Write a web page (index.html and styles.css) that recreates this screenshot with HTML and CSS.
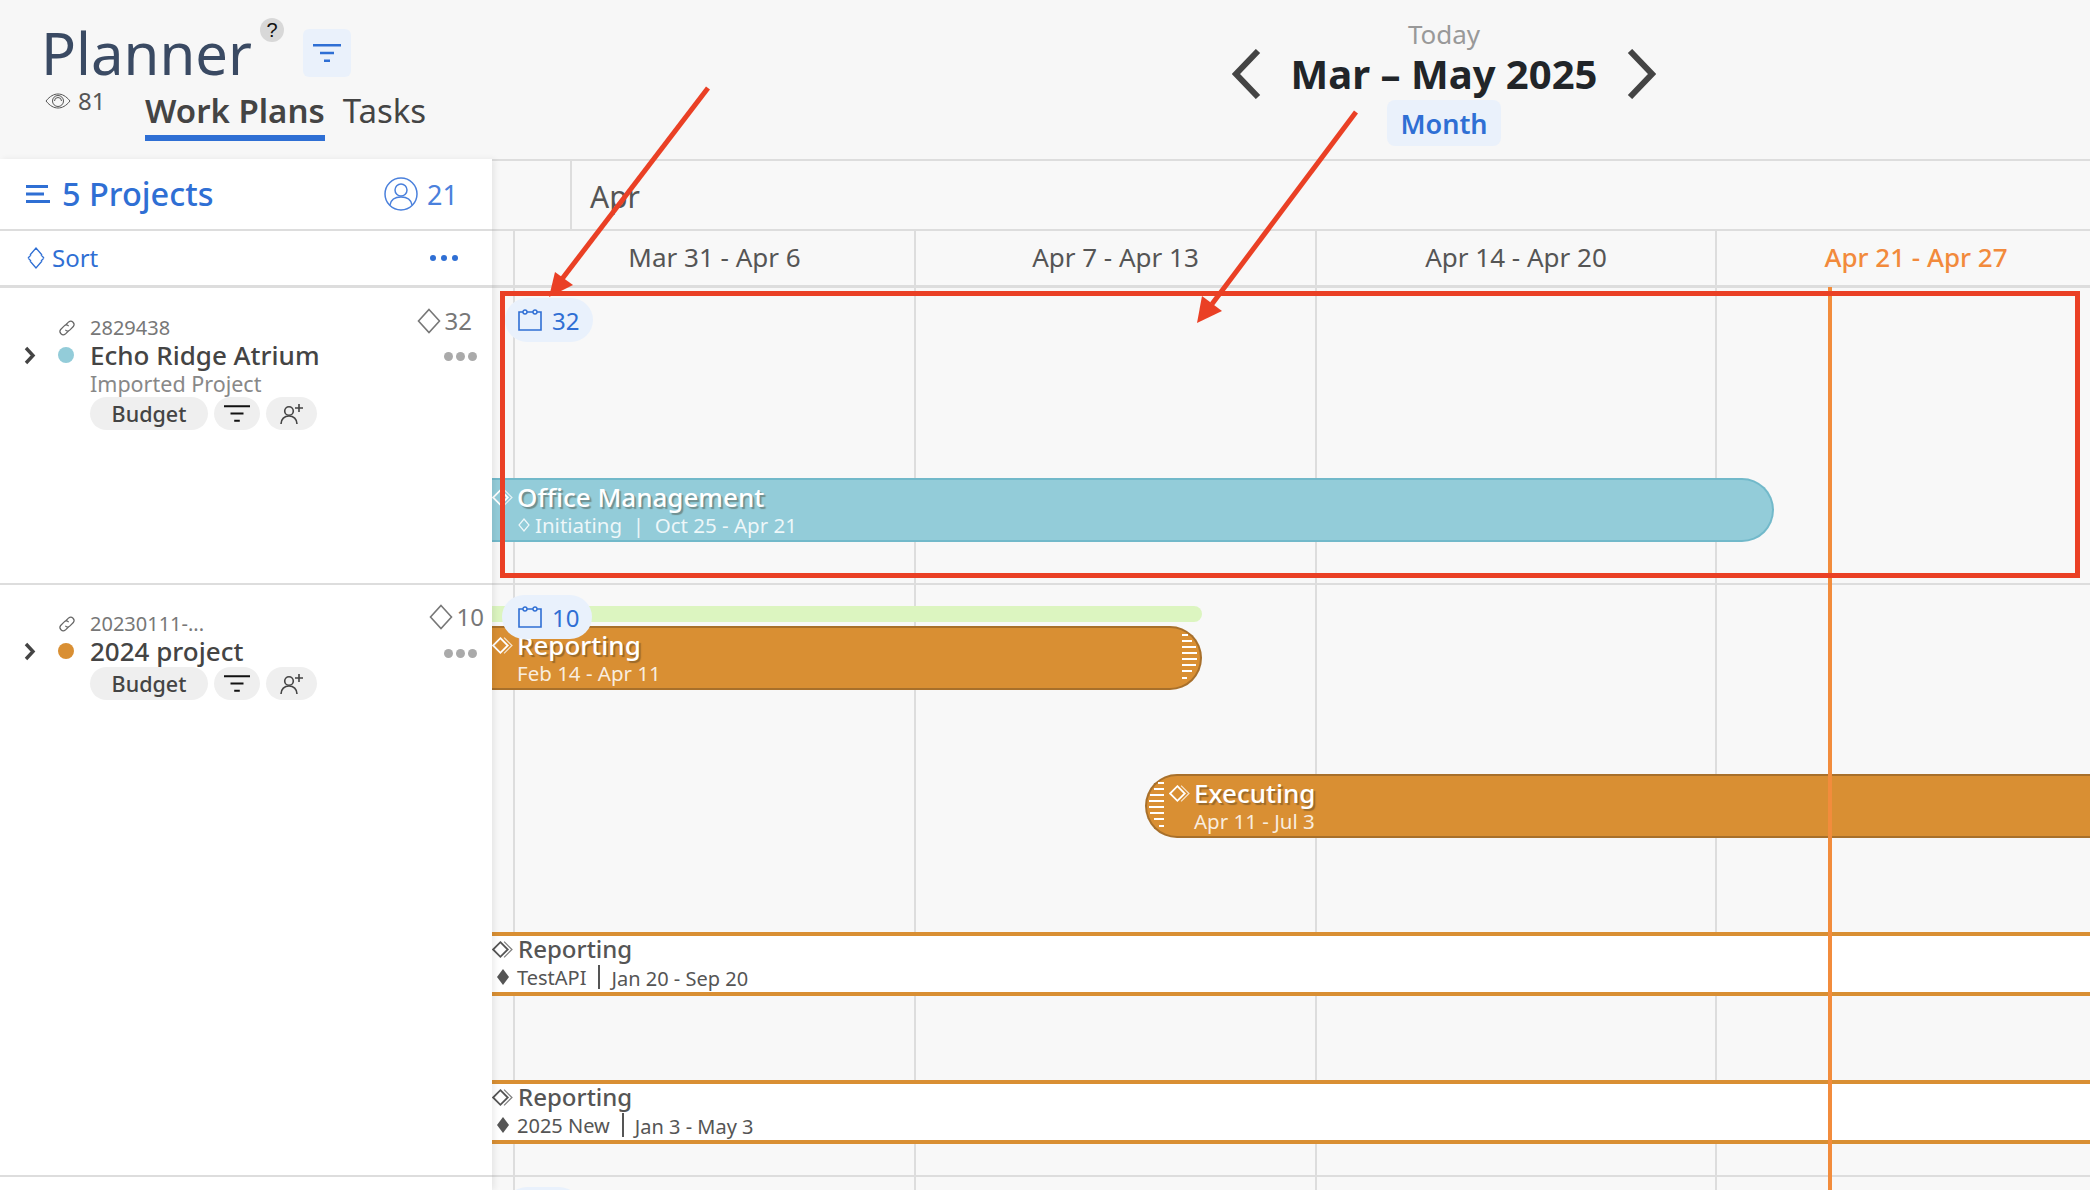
FILE: index.html
```html
<!DOCTYPE html>
<html lang="en">
<head>
<meta charset="utf-8">
<title>Planner</title>
<link rel="stylesheet" href="styles.css">
</head>
<body>
<svg class="defs" width="0" height="0" aria-hidden="true">
  <symbol id="i-cal" viewBox="0 0 24 22"><path d="M5 3H1v18h22V3h-4M9 3h6" fill="none" stroke="currentColor" stroke-width="1.6"/><circle cx="7" cy="3" r="2" fill="none" stroke="currentColor" stroke-width="1.4"/><circle cx="17" cy="3" r="2" fill="none" stroke="currentColor" stroke-width="1.4"/></symbol>
  <symbol id="i-filter" viewBox="0 0 28 18"><path d="M0 1.2h28M7 9h14M11 16.8h6" fill="none" stroke="currentColor" stroke-width="2.4"/></symbol>
  <symbol id="i-addp" viewBox="0 0 24 22"><circle cx="9" cy="8" r="4.3" fill="none" stroke="currentColor" stroke-width="1.6"/><path d="M1 21c0-5 3.500-8 8-8s8 3 8 8M19 1v8M15 5h8" fill="none" stroke="currentColor" stroke-width="1.6"/></symbol>
  <symbol id="i-link" viewBox="0 0 18 18"><path d="M7.500 6.500 10.500 3.500a3 3 0 0 1 4.200 4.200l-3 3a3 3 0 0 1-4.200 0M10.500 11.500l-3 3a3 3 0 0 1-4.200-4.200l3-3a3 3 0 0 1 4.200 0" fill="none" stroke="currentColor" stroke-width="1.1"/></symbol>
  <symbol id="i-dbl" viewBox="0 0 20 18"><path d="M8 2 15 9 8 16 1 9Z" fill="none" stroke="currentColor" stroke-width="1.7"/><path d="M11.500 1.500 19 9 11.500 16.500" fill="none" stroke="currentColor" stroke-width="1.2" opacity=".75"/></symbol>
  <symbol id="i-dia" viewBox="0 0 24 26"><path d="M12 1.500 22.500 13 12 24.500 1.500 13Z" fill="none" stroke="currentColor" stroke-width="1.6"/></symbol>
</svg>

<div class="app">
  <header class="topbar">
    <div class="brand">
      <div class="title-row">
        <h1 class="planner">Planner</h1>
        <span class="help">?</span>
        <button class="filter-btn"><svg class="filter-ico"><use href="#i-filter"/></svg></button>
      </div>
      <div class="sub-row">
        <div class="views">
          <svg class="eye" viewBox="0 0 26 16"><path d="M1 8C5 3 9 1 13 1s8 2 12 7c-4 5-8 7-12 7S5 13 1 8Z" fill="none" stroke="currentColor" stroke-width="1"/><circle cx="13" cy="8" r="5.500" fill="none" stroke="currentColor" stroke-width="1"/><path d="M9.500 8a3.500 3.500 0 0 1 7 0" fill="none" stroke="currentColor" stroke-width="1"/></svg>
          <span>81</span>
        </div>
        <nav class="tabs">
          <a class="tab tab-active">Work Plans</a>
          <a class="tab">Tasks</a>
        </nav>
      </div>
    </div>
    <div class="period">
      <div class="today">Today</div>
      <div class="period-row">
        <svg class="arrow-ico" viewBox="0 0 30 50"><path d="M26 2 4 25l22 23" fill="none" stroke="currentColor" stroke-width="6"/></svg>
        <div class="period-title">Mar – May 2025</div>
        <svg class="arrow-ico" viewBox="0 0 30 50"><path d="M4 2l22 23L4 48" fill="none" stroke="currentColor" stroke-width="6"/></svg>
      </div>
      <div class="month-chip">Month</div>
    </div>
  </header>

  <main class="main">
    <aside class="sidebar">
      <div class="side-head">
        <div class="side-head-left">
          <svg class="burger" viewBox="0 0 24 18"><path d="M0 1.500h22M0 9h18M0 16.500h24" fill="none" stroke="currentColor" stroke-width="2.800"/></svg>
          <span class="projects-label">5 Projects</span>
        </div>
        <div class="side-head-right">
          <svg class="user-ico" viewBox="0 0 34 34"><circle cx="17" cy="17" r="16" fill="none" stroke="currentColor" stroke-width="1.500"/><circle cx="17" cy="13" r="6" fill="none" stroke="currentColor" stroke-width="1.500"/><path d="M6 28c1-6 5-8 11-8s10 2 11 8" fill="none" stroke="currentColor" stroke-width="1.500"/></svg>
          <span>21</span>
        </div>
      </div>
      <div class="side-sort">
        <div class="sort-left">
          <svg class="sort-ico" viewBox="0 0 18 22"><path d="M3 8 9 1l6 7M3 14l6 7 6-7M1 11l3-3M17 11l-3-3M1 11l3 3M17 11l-3 3" fill="none" stroke="currentColor" stroke-width="1.300"/></svg>
          <span>Sort</span>
        </div>
        <div class="dots dots-blue"><i></i><i></i><i></i></div>
      </div>

      <section class="project project-first">
        <div class="project-body">
          <span></span>
          <svg class="link-ico"><use href="#i-link"/></svg>
          <div class="project-id">2829438</div>
          <svg class="chev" viewBox="0 0 12 19"><path d="M2 2l7 7.500L2 17" fill="none" stroke="currentColor" stroke-width="3.400"/></svg>
          <span class="dot dot-teal"></span>
          <div class="project-name">Echo Ridge Atrium</div>
          <div class="project-sub">Imported Project</div>
          <div class="pills">
            <span class="pill pill-text">Budget</span>
            <span class="pill pill-filter"><svg class="pill-filter-ico"><use href="#i-filter"/></svg></span>
            <span class="pill pill-add"><svg class="pill-add-ico"><use href="#i-addp"/></svg></span>
          </div>
        </div>
        <div class="meta">
          <div class="count"><svg class="count-ico"><use href="#i-dia"/></svg><span>32</span></div>
          <div class="dots dots-grey"><i></i><i></i><i></i></div>
        </div>
      </section>

      <section class="project project-second">
        <div class="project-body">
          <span></span>
          <svg class="link-ico"><use href="#i-link"/></svg>
          <div class="project-id">20230111-...</div>
          <svg class="chev" viewBox="0 0 12 19"><path d="M2 2l7 7.500L2 17" fill="none" stroke="currentColor" stroke-width="3.400"/></svg>
          <span class="dot dot-orange"></span>
          <div class="project-name">2024 project</div>
          <div class="pills">
            <span class="pill pill-text">Budget</span>
            <span class="pill pill-filter"><svg class="pill-filter-ico"><use href="#i-filter"/></svg></span>
            <span class="pill pill-add"><svg class="pill-add-ico"><use href="#i-addp"/></svg></span>
          </div>
        </div>
        <div class="meta meta-wide">
          <div class="count"><svg class="count-ico"><use href="#i-dia"/></svg><span>10</span></div>
          <div class="dots dots-grey"><i></i><i></i><i></i></div>
        </div>
      </section>
    </aside>

    <section class="timeline">
      <div class="months">
        <div class="month-blank"></div>
        <div class="month-name">Apr</div>
      </div>
      <div class="weeks week-grid">
        <div class="week"></div>
        <div class="week">Mar 31 - Apr 6</div>
        <div class="week">Apr 7 - Apr 13</div>
        <div class="week">Apr 14 - Apr 20</div>
        <div class="week week-now">Apr 21 - Apr 27</div>
      </div>
      <div class="gantt">
        <div class="grid-lines week-grid"><span></span><span></span><span></span><span></span><span></span></div>

        <div class="lane lane-one">
          <div class="chip chip-a"><svg class="chip-ico"><use href="#i-cal"/></svg><span>32</span></div>
          <div class="bar bar-teal">
            <div class="bar-title"><svg class="dbl"><use href="#i-dbl"/></svg><span>Office Management</span></div>
            <div class="bar-sub bar-sub-icon"><svg class="dia-sm" viewBox="0 0 12 14"><path d="M6 1l5 6-5 6-5-6Z" fill="none" stroke="currentColor" stroke-width="1.200"/></svg><span>Initiating&nbsp; |&nbsp; Oct 25 - Apr 21</span></div>
          </div>
        </div>

        <div class="lane lane-two">
          <div class="green-bar"></div>
          <div class="bar bar-orange bar-report">
            <div class="bar-title"><svg class="dbl"><use href="#i-dbl"/></svg><span>Reporting</span></div>
            <div class="bar-sub bar-sub-plain">Feb 14 - Apr 11</div>
            <svg class="hatch hatch-right" viewBox="0 0 15 46"><path d="M0 1h6M0 7h10M0 13h14M0 19h15M0 25h15M0 31h14M0 37h10M0 44h5" stroke="#fff" stroke-width="1.800"/></svg>
          </div>
          <div class="bar bar-orange bar-exec">
            <svg class="hatch hatch-left" viewBox="0 0 15 46"><path d="M9 1h6M5 7h10M1 13h14M0 19h15M0 25h15M1 31h14M5 37h10M10 44h5" stroke="#fff" stroke-width="1.800"/></svg>
            <div class="bar-title"><svg class="dbl"><use href="#i-dbl"/></svg><span>Executing</span></div>
            <div class="bar-sub bar-sub-plain">Apr 11 - Jul 3</div>
          </div>
          <div class="task task-one">
            <div class="task-title"><svg class="dbl"><use href="#i-dbl"/></svg><span>Reporting</span></div>
            <div class="task-sub"><svg class="dia-solid" viewBox="0 0 14 18"><path d="M7 1l6 8-6 8-6-8Z" fill="currentColor"/></svg><span>TestAPI</span><i class="pipe"></i><span class="task-date">Jan 20 - Sep 20</span></div>
          </div>
          <div class="task task-two">
            <div class="task-title"><svg class="dbl"><use href="#i-dbl"/></svg><span>Reporting</span></div>
            <div class="task-sub"><svg class="dia-solid" viewBox="0 0 14 18"><path d="M7 1l6 8-6 8-6-8Z" fill="currentColor"/></svg><span>2025 New</span><i class="pipe"></i><span class="task-date">Jan 3 - May 3</span></div>
          </div>
          <div class="chip chip-b"><svg class="chip-ico"><use href="#i-cal"/></svg><span>10</span></div>
        </div>

        <div class="lane lane-three">
          <div class="chip chip-c"></div>
        </div>
      </div>
      <div class="today-line"></div>
    </section>
  </main>

  <div class="callout-box"></div>
  <svg class="callouts" viewBox="0 0 2090 1190">
    <path d="M708 88 562 279" stroke="#ea4025" stroke-width="5" fill="none"/>
    <path d="M549 297 555 272 573 285Z" fill="#ea4025"/>
    <path d="M1356 112 1212 304" stroke="#ea4025" stroke-width="5" fill="none"/>
    <path d="M1197 323 1202 296 1222 311Z" fill="#ea4025"/>
  </svg>
</div>
</body>
</html>
```

FILE: styles.css
```css
* { box-sizing: border-box; }
html, body { margin: 0; padding: 0; }
body { font-family: "Noto Sans", "Open Sans", sans-serif; color: #444; background: #f8f8f8; }
.defs { position: absolute; }
svg { display: block; flex: none; }

.app { position: relative; width: 2090px; height: 1190px; overflow: hidden; display: flex; flex-direction: column; }

/* top bar */
.topbar { height: 159px; flex: none; display: flex; padding-left: 43px; background: #f7f7f7; }
.brand { width: 1188px; flex: none; display: flex; flex-direction: column; padding-top: 18px; }
.title-row { display: flex; height: 70px; align-items: flex-start; }
.planner { margin: 0 0 0 -2px; font-size: 58px; line-height: 70px; font-weight: 400; color: #3a4a63; }
.help { width: 24px; height: 24px; margin-left: 8px; border-radius: 50%; background: #d8d8d8; color: #111; font: 20px/24px "Liberation Sans", sans-serif; text-align: center; }
.filter-btn { width: 48px; height: 48px; margin: 11px 0 0 19px; padding: 0; border: 0; border-radius: 6px; background: #eaf1fb; color: #2f6fd4; display: flex; align-items: center; justify-content: center; }
.filter-ico { width: 28px; height: 18px; }
.sub-row { display: flex; align-items: flex-start; }
.views { display: flex; align-items: center; gap: 7px; width: 102px; height: 26px; padding-left: 2px; font-size: 24px; line-height: 26px; color: #555; }
.eye { width: 26px; height: 16px; color: #555; }
.tabs { display: flex; gap: 18px; }
.tab { display: block; height: 53px; font-size: 33px; line-height: 46px; color: #444; }
.tab-active { font-weight: 600; border-bottom: 6px solid #2f6fd4; }

.period { width: 426px; flex: none; display: flex; flex-direction: column; align-items: center; padding-top: 19px; }
.today { font-size: 26px; line-height: 30px; color: #999; }
.period-row { display: flex; align-items: center; gap: 29px; height: 50px; }
.arrow-ico { width: 30px; height: 50px; color: #444; }
.period-title { font-size: 40px; line-height: 50px; font-weight: 700; color: #212529; white-space: nowrap; }
.month-chip { height: 46px; margin-top: 1px; padding: 0 13px; border-radius: 8px; background: #eaf1fb; color: #2f6fd4; font-size: 27px; line-height: 47px; font-weight: 600; }

/* main */
.main { flex: 1; display: flex; min-height: 0; }
.sidebar { position: relative; z-index: 3; width: 492px; flex: none; background: #fff; box-shadow: 3px 0 6px rgba(0,0,0,.07); }
.side-head { height: 72px; display: flex; align-items: center; justify-content: space-between; padding: 0 34px 0 26px; border-bottom: 2px solid #ddd; color: #2f6fd4; }
.side-head-left { display: flex; align-items: center; gap: 12px; }
.burger { width: 24px; height: 18px; }
.projects-label { font-size: 32.500px; font-weight: 500; line-height: 40px; }
.side-head-right { display: flex; align-items: center; gap: 9px; font-size: 27px; color: #4a80dc; }
.user-ico { width: 34px; height: 34px; }
.side-sort { height: 57px; display: flex; align-items: center; justify-content: space-between; padding: 0 34px 1px 27px; border-bottom: 3px solid #ddd; color: #2f6fd4; }
.sort-left { display: flex; align-items: center; gap: 7px; font-size: 24px; }
.sort-ico { width: 18px; height: 22px; }
.dots { display: flex; }
.dots i { display: block; border-radius: 50%; }
.dots-blue { gap: 5px; }
.dots-blue i { width: 6px; height: 6px; background: #2f6fd4; }
.dots-grey { gap: 3px; }
.dots-grey i { width: 9px; height: 9px; background: #aaa; }

.project { display: flex; justify-content: space-between; border-bottom: 2px solid #ddd; padding-left: 24px; }
.project-first { height: 297px; }
.project-second { height: 592px; }
.project-body { display: grid; grid-template-columns: 34px 32px 1fr; grid-auto-rows: min-content; padding-top: 27px; }
.project-first .project-body { padding-top: 28px; }
.link-ico { width: 20px; height: 20px; margin-left: -1px; color: #666; align-self: center; }
.project-id { font-size: 20px; line-height: 24px; color: #777; }
.chev { width: 12px; height: 19px; color: #444; align-self: center; }
.dot { width: 16px; height: 16px; border-radius: 50%; align-self: center; }
.dot-teal { background: #93ccd9; }
.dot-orange { background: #d98f33; }
.project-name { font-size: 26px; line-height: 30px; font-weight: 500; color: #444; white-space: nowrap; }
.project-sub { grid-column: 3; margin-top: 2px; font-size: 21.500px; line-height: 24px; color: #888; }
.pills { grid-column: 3; display: flex; gap: 6px; margin-top: 1px; }
.pill { display: flex; align-items: center; justify-content: center; height: 33px; border-radius: 17px; background: #efefef; }
.pill-text { width: 118px; font-size: 21.500px; font-weight: 500; color: #444; }
.pill-filter { width: 46px; color: #111; }
.pill-filter-ico { width: 26px; height: 17px; }
.pill-add { width: 51px; color: #444; }
.pill-add-ico { width: 24px; height: 22px; }

.meta { display: flex; flex-direction: column; align-items: flex-end; padding: 18px 15px 0 0; }
.count { display: flex; align-items: center; gap: 4px; height: 30px; margin-right: 5px; font-size: 24px; line-height: 30px; color: #777; }
.count-ico { width: 24px; height: 26px; }
.meta .dots { margin-top: 16px; }
.meta-wide { padding-top: 17px; }
.meta-wide .count { margin-right: -7px; }
.meta-wide .dots { margin-top: 17px; }

/* timeline */
.timeline { position: relative; flex: 1; min-width: 0; overflow: hidden; background: #f8f8f8; }
.months { display: flex; height: 72px; border-top: 2px solid #ddd; border-bottom: 2px solid #ddd; }
.month-blank { width: 80px; border-right: 2px solid #ddd; }
.month-name { padding-left: 18px; font-size: 30px; line-height: 72px; height: 68px; color: #555; }
.week-grid { display: grid; grid-template-columns: 21px 401px 401px 400px 400px; }
.weeks { height: 57px; border-bottom: 3px solid #ddd; }
.week { font-size: 26px; line-height: 53px; text-align: center; color: #555; border-left: 2px solid #ddd; white-space: nowrap; }
.week:first-child { border-left: 0; }
.week-now { color: #f28a3c; font-weight: 500; }

.gantt { position: relative; }
.grid-lines { position: absolute; top: 0; left: 0; height: 902px; }
.grid-lines span { border-left: 2px solid #ddd; }
.grid-lines span:first-child { border-left: 0; }
.lane { position: relative; border-bottom: 2px solid #ddd; }
.lane-one { height: 297px; }
.lane-two { height: 592px; }
.lane-three { height: 20px; border-bottom: 0; }

.chip { position: absolute; top: 10px; height: 44px; border-radius: 22px; background: #e9f1fc; color: #2f6fd4; display: flex; align-items: center; gap: 10px; font-size: 24px; z-index: 2; }
.chip-a { left: 13px; width: 88px; padding-left: 13px; }
.chip-b { left: 10px; width: 90px; padding-left: 16px; }
.chip-c { left: 13px; width: 76px; }
.chip-ico { width: 24px; height: 22px; }

.bar { position: absolute; height: 64px; color: #fff; border-style: solid; border-width: 2px 2px 2px 0; }
.bar-teal { top: 190px; left: 0; width: 1282px; background: #93ccd9; border-color: #72b9ca; border-radius: 0 32px 32px 0; padding: 2px 0 0 0; }
.bar-orange { background: #d98f33; border-color: #a8702b; }
.bar-report { top: 41px; left: 0; width: 710px; border-radius: 0 32px 32px 0; padding: 2px 0 0 0; }
.bar-exec { top: 189px; left: 653px; width: 1000px; border-width: 2px 0 2px 2px; border-radius: 32px 0 0 32px; padding: 2px 0 0 22px; }
.green-bar { position: absolute; top: 21px; left: 0; width: 710px; height: 16px; border-radius: 0 8px 8px 0; background: #dcf5c0; }

.bar-title { display: flex; align-items: center; gap: 4px; font-size: 26px; line-height: 30px; font-weight: 500; text-shadow: 2px 2px 1px rgba(60,50,30,.4); white-space: nowrap; }
.dbl { width: 21px; height: 19px; }
.bar-sub { padding-left: 26px; font-size: 20.500px; line-height: 26px; color: rgba(255,255,255,.85); white-space: nowrap; }
.bar-sub-plain { padding-left: 25px; }
.bar-sub-icon { display: flex; align-items: center; gap: 5px; }
.dia-sm { width: 12px; height: 14px; }
.hatch { position: absolute; top: 6px; width: 15px; height: 46px; }
.hatch-right { right: 3px; }
.hatch-left { left: 2px; top: 6px; }

.task { position: absolute; left: 0; width: 100%; height: 64px; background: #fff; border-top: 4px solid #d98f33; border-bottom: 4px solid #d98f33; color: #555; }
.task-one { top: 347px; }
.task-two { top: 495px; }
.task-title { display: flex; align-items: center; gap: 5px; font-size: 24px; line-height: 26px; font-weight: 500; white-space: nowrap; }
.task-sub { display: flex; align-items: center; height: 30px; padding-left: 4px; font-size: 20px; white-space: nowrap; }
.dia-solid { width: 14px; height: 18px; margin-right: 7px; }
.pipe { display: block; width: 2px; height: 24px; margin: 0 11px 0 12px; background: #555; }
.task-date { padding-top: 3px; }
.today-line { position: absolute; z-index: 4; left: 1336px; top: 128px; bottom: 0; width: 4px; background: #f28c3c; }

/* annotations */
.callout-box { position: absolute; z-index: 5; left: 500px; top: 291px; width: 1580px; height: 287px; border: 5px solid #ea4025; }
.callouts { position: absolute; z-index: 6; left: 0; top: 0; width: 2090px; height: 1190px; pointer-events: none; }
```
